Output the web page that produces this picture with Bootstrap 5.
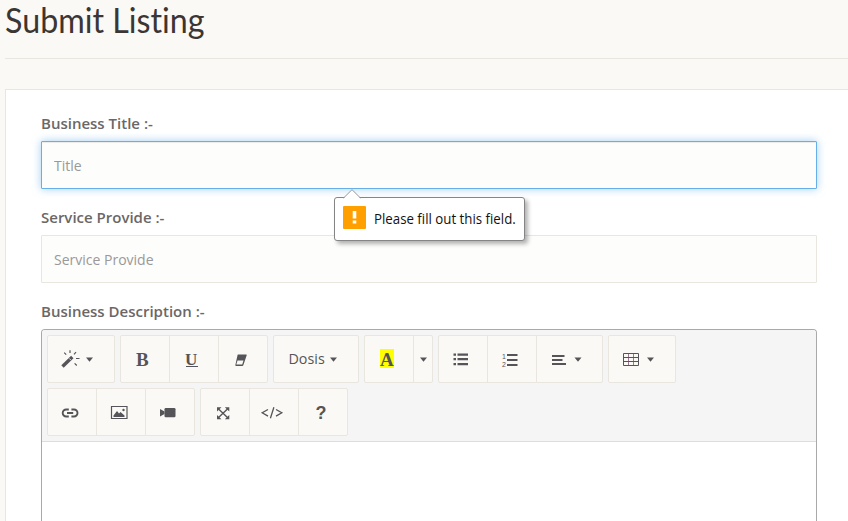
<!DOCTYPE html>
<html lang="en">
<head>
<meta charset="utf-8">
<meta name="viewport" content="width=device-width, initial-scale=1">
<title>Submit Listing</title>
<link href="https://cdn.jsdelivr.net/npm/bootstrap@5.3.0/dist/css/bootstrap.min.css" rel="stylesheet">
<style>
body{background:#faf9f5;font:14px/20px "Open Sans",sans-serif;color:#666;height:521px;overflow:hidden}
.page-head{margin-left:5px;height:59px;border-bottom:1px solid #e8e6df}
.page-head h1{font:35.5px/39px Lato,sans-serif;font-variant-ligatures:none;color:#3b3634;margin:0;transform-origin:0 0;transform:scaleX(.908);width:max-content;white-space:nowrap}
.panel{margin:30px -10px 0 5px;height:432px;overflow:hidden;background:#fff;border:1px solid #e8e6df;border-bottom:0;padding:24px 40px 0 35px}
.form-label{display:block;font-weight:600;font-size:15px;line-height:18px;margin:0 0 9px;color:#6b6767}
.field{display:block;width:776px;height:48px;padding:0 12px;border:1px solid #e8e6df;border-radius:1px;background:#fdfdfb;font-size:14px;color:#666;box-shadow:none}
.field::placeholder{color:#999;opacity:1}
.field.active-field{background:#fdfdfb;border-color:#66afe9;box-shadow:inset 0 1px 1px rgba(0,0,0,.075),0 0 8px rgba(102,175,233,.6)}
.field-row{height:94px}
.editor{width:776px;height:192px;border:1px solid #a9a9a9;border-bottom:0;border-radius:4px 4px 0 0;overflow:hidden}
.tools{background:#f5f5f5;height:112px;border-bottom:1px solid #ddd;padding:5px;gap:5px;align-content:flex-start}
.tools .btn{flex:none;width:50px;height:48px;padding:0;border:1px solid #e8e6df;border-radius:2px;background:#faf9f5;color:#555559;font-size:14px;line-height:46px}
.tools .btn svg{display:block;fill:#555559;stroke:none}
.tools .w-menu{width:68px}.tools .w-align{width:67px}.tools .w-font{width:86px}.tools .w-split{width:20px}
.tip{left:334px;top:197px;width:191px;height:44px;background:#fff;border:1px solid #858585;border-radius:3px;box-shadow:3px 3px 4px rgba(0,0,0,.3);color:#111;z-index:5}
.tip .point{left:8px;top:-9px}
.tip .warn{left:8px;top:8px}
.tip span{margin-left:39px;font:14px/20px "Open Sans",sans-serif;white-space:nowrap;transform-origin:0 50%;transform:scaleX(.947)}
</style>
</head>
<body>
<header class="page-head"><h1>Submit Listing</h1></header>
<main class="panel">
  <div class="field-row"><label class="form-label" for="t">Business Title :-</label><input id="t" class="form-control field active-field" placeholder="Title"></div>
  <div class="field-row"><label class="form-label" for="s">Service Provide :-</label><input id="s" class="form-control field" placeholder="Service Provide"></div>
  <label class="form-label">Business Description :-</label>
  <div class="editor">
    <div class="tools d-flex flex-wrap">
      <div class="btn-group">
        <button class="btn w-menu" aria-label="Style"><svg width="66" height="46" viewBox="48 336 66 46"><path d="M62.5 366.5 72.3 357" stroke="#555559" stroke-width="3.4"/><path d="M69.2 358.4l1.6 1.6" stroke="#faf9f5" stroke-width=".8"/><path d="M70 350.3v2.6M64.2 352.6l2 2M76 352.2l-2 2.2M76 358.5h3.5M74.6 363.3l2.2 2.2" stroke="#555559" stroke-width="1.2"/><path d="M86 357.5h7l-3.5 4.3z"/></svg></button>
      </div>
      <div class="btn-group">
        <button class="btn" aria-label="Bold"><svg width="48" height="46" viewBox="121 336 48 46"><text x="136" y="366" font-family="Liberation Serif,serif" font-weight="700" font-size="19">B</text></svg></button>
        <button class="btn" aria-label="Underline"><svg width="48" height="46" viewBox="170 336 48 46"><text x="185" y="364.5" font-family="Liberation Serif,serif" font-weight="700" font-size="17">U</text><path d="M186 366h12v1h-12z"/></svg></button>
        <button class="btn" aria-label="Clear"><svg width="48" height="46" viewBox="219 336 48 46"><path d="M238 354.5h8.2q.8 0 .5.8l-3.3 9.7q-.3.9-1.2.9h-6q-1.2 0-.8-1.2l2-9q.2-1.2.6-1.2z"/><path d="M237.500 360.500h6l-1.300 4h-5.900z" fill="#faf9f5"/></svg></button>
      </div>
      <div class="btn-group"><button class="btn w-font"><svg width="84" height="46" viewBox="274 336 84 46"><text x="288.500" y="364" font-family="Open Sans,sans-serif" font-size="14.300">Dosis</text><path d="M330 357.500h7l-3.500 4.300z"/></svg></button></div>
      <div class="btn-group">
        <button class="btn" aria-label="Highlight"><svg width="48" height="46" viewBox="365 336 48 46"><path fill="#ff0" d="M380 349h14v19h-14z"/><text x="380" y="366" font-family="Liberation Serif,serif" font-weight="700" font-size="19">A</text></svg></button>
        <button class="btn w-split" aria-label="More colors"><svg width="18" height="46" viewBox="414 336 18 46"><path d="M420 357.500h7l-3.500 4.300z"/></svg></button>
      </div>
      <div class="btn-group">
        <button class="btn" aria-label="Bullets"><svg width="48" height="46" viewBox="439 336 48 46"><path d="M453.500 353.500H456v2.200h-2.500zM453.500 358H456v2.200h-2.500zM453.500 363H456v2.200h-2.500zM457.500 353.500H468v2.200h-10.500zM457.500 358H468v2.200h-10.500zM457.500 363H468v2.200h-10.500z"/></svg></button>
        <button class="btn" aria-label="Numbers"><svg width="48" height="46" viewBox="488 336 48 46"><path d="M507 354h10.500v2H507zM507 359h10.500v2H507zM507 364h10.500v2H507z"/><text x="502" y="359" font-family="Liberation Sans,sans-serif" font-size="7">1</text><text x="502" y="367" font-family="Liberation Sans,sans-serif" font-size="7">2</text></svg></button>
        <button class="btn w-align" aria-label="Align"><svg width="65" height="46" viewBox="537 336 65 46"><path d="M552 355h12.500v2H552zM552 359h10.500v2H552zM552 363h14v2H552zM574.500 357.500h7l-3.500 4.300z"/></svg></button>
      </div>
      <div class="btn-group"><button class="btn w-menu" aria-label="Table"><svg width="66" height="46" viewBox="609 336 66 46"><path d="M628.500 354v11.500M633.500 354v11.500" fill="none" stroke="#9a7a90"/><path d="M623.500 353.500h15v12h-15zM623.500 357.500h15M623.500 361.500h15" fill="none" stroke="#555559"/><path d="M647 357.500h7l-3.500 4.300z"/></svg></button></div>
      <div class="btn-group">
        <button class="btn" aria-label="Link"><svg width="48" height="46" viewBox="48 389 48 46"><path d="M68.800 409.500h-2.600a3.500 3.500 0 0 0 0 7h2.600M71.400 409.500h2.600a3.500 3.500 0 0 1 0 7h-2.600M67 413h6.200" fill="none" stroke="#555559" stroke-width="1.900"/></svg></button>
        <button class="btn" aria-label="Picture"><svg width="48" height="46" viewBox="97 389 48 46"><path d="M111.500 406.500h15.500v12h-15.500z" fill="none" stroke="#555559" stroke-width="1.200"/><path d="M113.500 417v-1.500l3.500-4.500 2 2.500 1.500-1.500 4 3.500v1.500z"/><circle cx="123.500" cy="410" r="1.200"/></svg></button>
        <button class="btn" aria-label="Video"><svg width="48" height="46" viewBox="146 389 48 46"><path d="M160 409l4.500 2.500v2.500l-4.500 2.500z"/><rect x="164.500" y="408" width="11" height="9.300" rx="1.200"/></svg></button>
      </div>
      <div class="btn-group">
        <button class="btn" aria-label="Full screen"><svg width="48" height="46" viewBox="201 389 48 46"><path d="M218 408.500l10 9.500M228 408.500l-10 9.500" stroke="#555559" stroke-width="1.400"/><path d="M217 407.300h4.500l-4.500 4.200zM229.300 407.300h-4.500l4.500 4.200zM217 419.200h4.500l-4.500-4.200zM229.300 419.200h-4.500l4.500-4.200z"/></svg></button>
        <button class="btn" aria-label="Code"><svg width="48" height="46" viewBox="250 389 48 46"><path d="M268 409.500l-5.800 3.300 5.800 3.300M276 409.500l5.800 3.300-5.800 3.300M273.900 407.300l-3.500 11" fill="none" stroke="#555559" stroke-width="1.300"/></svg></button>
        <button class="btn" aria-label="Help"><svg width="48" height="46" viewBox="299 389 48 46"><text x="315.500" y="419" font-family="Liberation Sans,sans-serif" font-weight="700" font-size="18">?</text></svg></button>
      </div>
    </div>
  </div>
</main>
<div class="tip position-absolute d-flex align-items-center">
  <svg class="point position-absolute" width="18" height="10"><path d="M0 10 9 .7 18 10z" fill="#fff"/><path d="M.5 9 9 .7 17.500 9" fill="none" stroke="#999"/></svg>
  <svg class="warn position-absolute" width="23" height="23"><rect width="23" height="23" rx="1" fill="#ffa000"/><path d="M9.700 5h3.600v7.500H9.700zM9.700 14.500h3.600v3H9.700z" fill="#fff"/></svg>
  <span>Please fill out this field.</span>
</div>
<script src="https://cdn.jsdelivr.net/npm/bootstrap@5.3.0/dist/js/bootstrap.bundle.min.js"></script>
</body>
</html>
